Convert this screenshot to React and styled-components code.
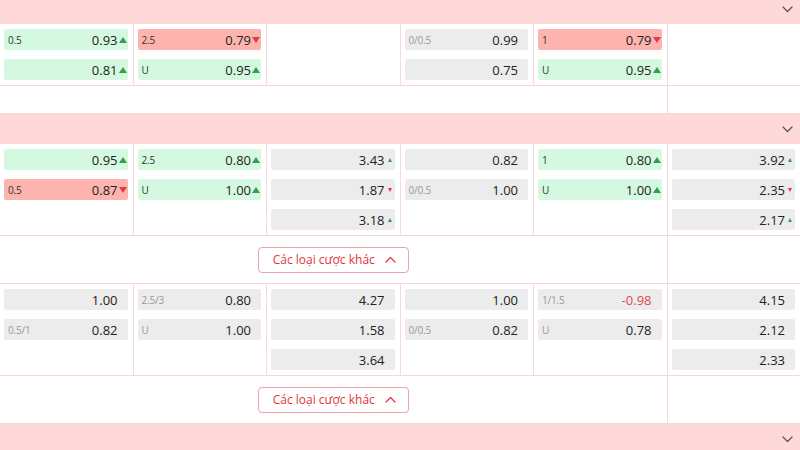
import React from 'react'
import styled, { createGlobalStyle } from 'styled-components'

const GlobalStyle = createGlobalStyle`
  html, body {
    margin: 0;
    padding: 0;
    background: #fff;
    overflow: hidden;
  }
  body {
    font-family: "Open Sans", "Noto Sans", sans-serif;
    color: #222;
  }
`

const groups = [
  [
    {
      more: false,
      cols: [
        [
          { l: '0.5', v: '0.93', t: 'green', a: 'up' },
          { v: '0.81', t: 'green', a: 'up' },
        ],
        [
          { l: '2.5', v: '0.79', t: 'red', a: 'down' },
          { l: 'U', v: '0.95', t: 'green', a: 'up' },
        ],
        [],
        [
          { l: '0/0.5', v: '0.99' },
          { v: '0.75' },
        ],
        [
          { l: '1', v: '0.79', t: 'red', a: 'down' },
          { l: 'U', v: '0.95', t: 'green', a: 'up' },
        ],
        [],
      ],
    },
  ],
  [
    {
      more: true,
      cols: [
        [
          { v: '0.95', t: 'green', a: 'up' },
          { l: '0.5', v: '0.87', t: 'red', a: 'down' },
        ],
        [
          { l: '2.5', v: '0.80', t: 'green', a: 'up' },
          { l: 'U', v: '1.00', t: 'green', a: 'up' },
        ],
        [
          { v: '3.43', a: 'up', small: true },
          { v: '1.87', a: 'down', small: true },
          { v: '3.18', a: 'up', small: true },
        ],
        [
          { v: '0.82' },
          { l: '0/0.5', v: '1.00' },
        ],
        [
          { l: '1', v: '0.80', t: 'green', a: 'up' },
          { l: 'U', v: '1.00', t: 'green', a: 'up' },
        ],
        [
          { v: '3.92', a: 'up', small: true },
          { v: '2.35', a: 'down', small: true },
          { v: '2.17', a: 'up', small: true },
        ],
      ],
    },
    {
      more: true,
      cols: [
        [
          { v: '1.00' },
          { l: '0.5/1', v: '0.82' },
        ],
        [
          { l: '2.5/3', v: '0.80' },
          { l: 'U', v: '1.00' },
        ],
        [{ v: '4.27' }, { v: '1.58' }, { v: '3.64' }],
        [
          { v: '1.00' },
          { l: '0/0.5', v: '0.82' },
        ],
        [
          { l: '1/1.5', v: '-0.98', neg: true },
          { l: 'U', v: '0.78' },
        ],
        [{ v: '4.15' }, { v: '2.12' }, { v: '2.33' }],
      ],
    },
  ],
]

const bg = { green: '#d5f9e0', red: '#fdb4af', gray: '#ececec' }

const Page = styled.div`
  width: 801px;
  margin-top: -6px;
`

const GroupHeader = styled.div`
  height: 30px;
  box-sizing: border-box;
  background: #ffd8d9;
  display: flex;
  align-items: center;
  justify-content: flex-end;
  padding-right: 8px;
  color: #555;
`

const OddsRow = styled.div`
  display: grid;
  grid-template-columns: repeat(6, 1fr);
  border-bottom: 1px solid #f7d5d8;
`

const Col = styled.div`
  display: flex;
  flex-direction: column;
  gap: 9px;
  padding: 5px 5px 5px 4px;
  border-right: 1px solid #f7d9dc;
  min-height: 51px;
`

const Odd = styled.div`
  height: 21px;
  border-radius: 2px;
  background: ${(p) => bg[p.$tone || 'gray']};
  display: flex;
  align-items: center;
  padding-left: 4px;
`

const Label = styled.span`
  font-size: 10px;
  color: ${(p) => (p.$tone ? '#333' : '#999')};
  letter-spacing: -0.2px;
`

const Value = styled.span`
  margin-left: auto;
  font-size: 13px;
  color: ${(p) => (p.$neg ? '#e5484d' : '#222')};
`

const ArrowSlot = styled.span`
  width: 10px;
  display: flex;
  align-items: center;
  justify-content: center;
`

const Arrow = styled.span`
  width: 0;
  height: 0;
  border-left: ${(p) => (p.$small ? 2.5 : 4)}px solid transparent;
  border-right: ${(p) => (p.$small ? 2.5 : 4)}px solid transparent;
  ${(p) =>
    p.$dir === 'up'
      ? `border-bottom: ${p.$small ? 4 : 6}px solid #3b9c4b;`
      : `border-top: ${p.$small ? 4 : 6}px solid #e63a42;`}
`

const MoreRow = styled.div`
  display: grid;
  grid-template-columns: repeat(6, 1fr);
  border-bottom: 1px solid #f7d5d8;
`

const MoreCell = styled.div`
  grid-column: span 5;
  display: flex;
  justify-content: center;
  align-items: center;
  min-height: 27px;
  padding: ${(p) => (p.$filled ? '10px 0 10px' : '0')};
  border-right: 1px solid #f7d9dc;
`

const MoreButton = styled.button`
  height: 26px;
  width: 151px;
  box-sizing: border-box;
  border: 1px solid #eaa3a7;
  border-radius: 4px;
  background: #fff;
  color: #e3343b;
  font-family: "Open Sans", "Noto Sans", sans-serif;
  font-size: 12px;
  display: flex;
  align-items: center;
  justify-content: center;
  gap: 10px;
  padding: 0 0 0 2px;
`

const Chevron = ({ up, color = '#555' }) => (
  <svg width="11" height="7" viewBox="0 0 11 7" fill="none">
    <path
      d={up ? 'M1 6 L5.5 1.5 L10 6' : 'M1 1 L5.5 5.5 L10 1'}
      stroke={color}
      strokeWidth="1.2"
      strokeLinecap="round"
      strokeLinejoin="round"
    />
  </svg>
)

function OddCell({ o }) {
  return (
    <Odd $tone={o.t}>
      {o.l && <Label $tone={o.t}>{o.l}</Label>}
      <Value $neg={o.neg}>{o.v}</Value>
      <ArrowSlot>{o.a && <Arrow $dir={o.a} $small={o.small} />}</ArrowSlot>
    </Odd>
  )
}

export default function App() {
  return (
    <>
      <GlobalStyle />
      <Page>
        {groups.map((rows, g) => (
          <React.Fragment key={g}>
            <GroupHeader>
              <Chevron />
            </GroupHeader>
            {rows.map((s, i) => (
              <React.Fragment key={i}>
                <OddsRow>
                  {s.cols.map((c, j) => (
                    <Col key={j}>
                      {c.map((o, k) => (
                        <OddCell key={k} o={o} />
                      ))}
                    </Col>
                  ))}
                </OddsRow>
                <MoreRow>
                  <MoreCell $filled={s.more}>
                    {s.more && (
                      <MoreButton>
                        Các loại cược khác
                        <Chevron up color="#e3343b" />
                      </MoreButton>
                    )}
                  </MoreCell>
                  <div />
                </MoreRow>
              </React.Fragment>
            ))}
          </React.Fragment>
        ))}
        <GroupHeader>
          <Chevron />
        </GroupHeader>
      </Page>
    </>
  )
}
